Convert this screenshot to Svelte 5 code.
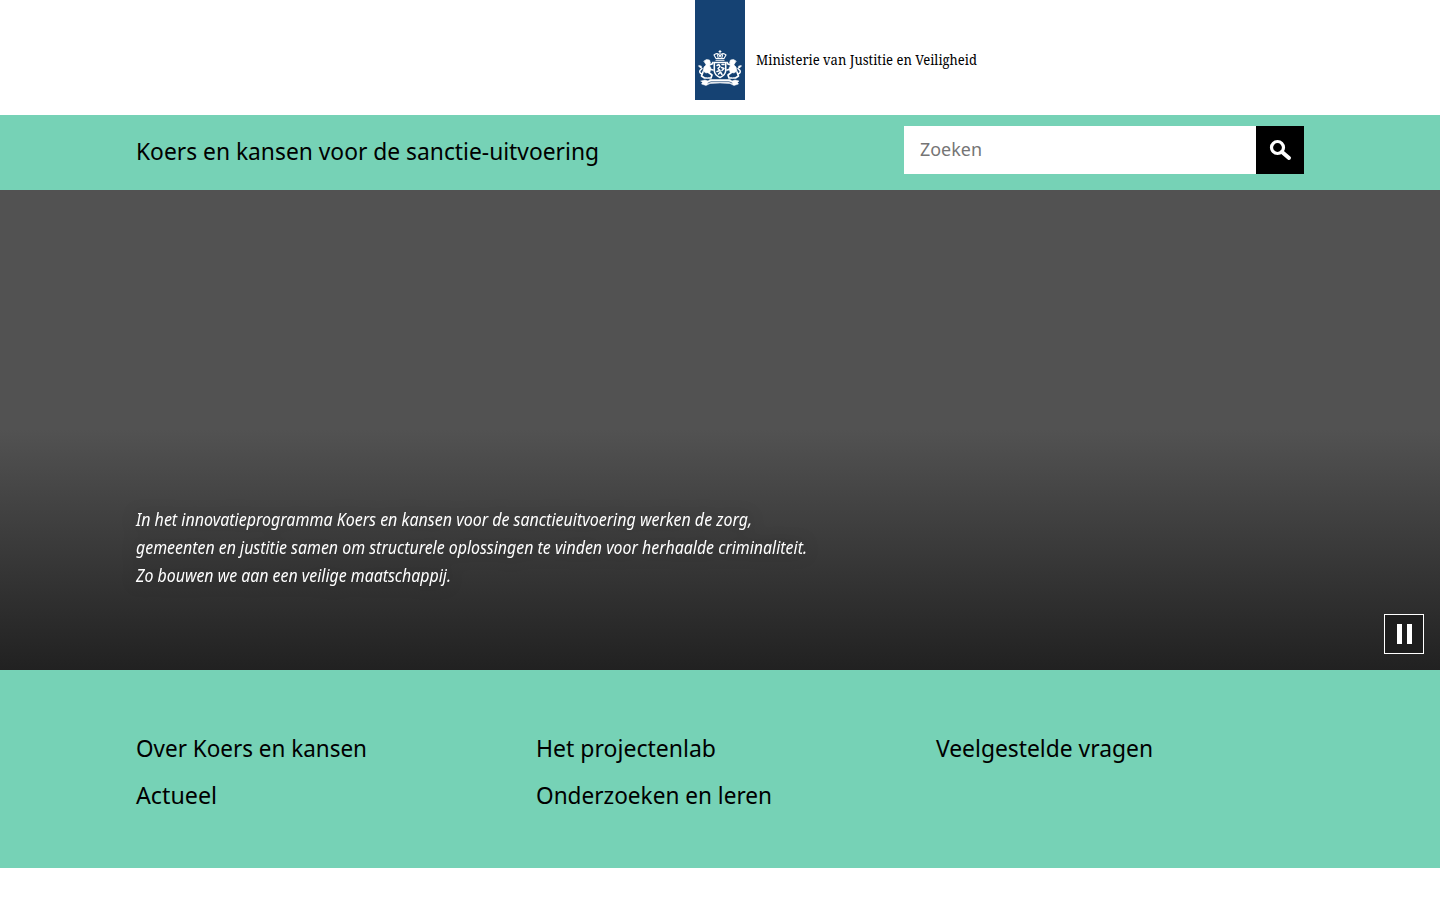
<script>
  const columns = [
    [{ text: 'Over Koers en kansen', width: 231 }, { text: 'Actueel', width: 81 }],
    [{ text: 'Het projectenlab', width: 180 }, { text: 'Onderzoeken en leren', width: 236 }],
    [{ text: 'Veelgestelde vragen', width: 217 }]
  ];
  const intro = [
    { text: 'In het innovatieprogramma Koers en kansen voor de sanctieuitvoering werken de zorg,', width: 616 },
    { text: 'gemeenten en justitie samen om structurele oplossingen te vinden voor herhaalde criminaliteit.', width: 671 },
    { text: 'Zo bouwen we aan een veilige maatschappij.', width: 315 }
  ];
</script>

{#snippet line(text, width, height, baseline)}
  <svg class="line" {width} {height}>
    <text x="0" y={baseline} textLength={width} lengthAdjust="spacingAndGlyphs">{text}</text>
  </svg>
{/snippet}

{#snippet lion()}
  <path d="M9 11l2.500-1.500 3 .5 1 3-1.500 2 2 3-1 4-4 1-3-2 1-4 2-2z" fill="#fff" stroke-width=".6" />
  <path d="M13 15.500l4-1.500 1-1.500M14 19l4 1M8 22l-1.500 4 3 2h2M13 22l4 3-1 3h-3" stroke-width="1.700" />
  <path d="M7 24q-3-1-2-3.500l2-2-2.500-2M4 16l2 .5" stroke-width="1.500" />
{/snippet}

<header>
  <div class="ribbon">
    <svg width="50" height="38" viewBox="0 0 50 38" fill="none" stroke="#fff" stroke-linecap="round" stroke-linejoin="round">
      <path d="M25 .5v3M24 1.500h2M21 8.500l-2-3.500q2.500-2.500 5-.5l1 2.500 1-2.500q2.500-2 5 .5l-2 3.500zM21 10.300h8M22.500 5l.7 3M27.500 5l-.7 3" stroke-width="1.100" />
      <path d="M19.300 12.500h11.400v8.500q-.7 4.500-5.700 6.500-5-2-5.700-6.500z" stroke-width="1.600" />
      <path d="M22 15.500l2-1 1 2-2 2 2 2-3 1M27 14.500h2M26.500 17.500l2.500 1-2 2M23.500 24l2-2 1.500 2.500" stroke-width="1.500" />
      {@render lion()}
      <g transform="matrix(-1 0 0 1 50 0)">{@render lion()}</g>
      <path d="M6 31l4-1 3 1 2-1.500h20l2 1.500 3-1 4 1-1.500 1.500 1 1.500-4.500 1.500-4-2q-10-1-20 0l-4 2-4.500-1.500 1-1.500z" fill="#fff" stroke-width=".5" />
      <path d="M13 33l3-1.300h18l3 1.300" stroke="#154273" stroke-width=".7" />
    </svg>
  </div>
  <div class="ministry">{@render line('Ministerie van Justitie en Veiligheid', 221, 24, 16)}</div>
</header>

<div class="bar">
  <div class="title">{@render line('Koers en kansen voor de sanctie-uitvoering', 463, 36, 27)}</div>
  <form>
    <div class="field">{@render line('Zoeken', 62, 28, 20)}</div>
    <button type="button" aria-label="Zoeken">
      <svg width="48" height="48" fill="none" stroke="#fff">
        <circle cx="21.500" cy="21.500" r="6" stroke-width="3.200" />
        <path d="M26 26l7 6" stroke-width="4" stroke-linecap="round" />
      </svg>
    </button>
  </form>
</div>

<main>
  <div class="intro">
    {#each intro as row}
      {@render line(row.text, row.width, 28, 20)}
    {/each}
  </div>
  <button class="pause" type="button" aria-label="Pauze"><i></i><i></i></button>
</main>

<nav>
  {#each columns as column}
    <div class="column">
      {#each column as link}
        {@render line(link.text, link.width, 47, 34)}
      {/each}
    </div>
  {/each}
</nav>

<style>
  :global(body) { margin: 0; background: #fff; font-family: "Noto Sans", sans-serif; }
  .line { display: block; overflow: visible; }
  header { height: 115px; display: flex; padding-left: 695px; box-sizing: border-box; }
  .ribbon { width: 50px; height: 100px; background: #154273; padding-top: 50px; box-sizing: border-box; }
  .ribbon svg { display: block; }
  .ministry { margin: 49px 0 0 11px; font-family: "Noto Serif", "Liberation Serif", serif; font-size: 13.500px; }
  .bar { height: 75px; background: #76d2b6; padding: 11px 136px 0; box-sizing: border-box; display: flex; justify-content: space-between; }
  .title { padding-top: 7px; font-size: 24px; }
  form { display: flex; height: 48px; margin: 0; }
  .field { width: 352px; background: #fff; padding: 10px 16px; box-sizing: border-box; font-size: 18.500px; fill: #757575; }
  form button { border: 0; background: #000; width: 48px; height: 48px; padding: 0; }
  form button svg { display: block; }
  main { position: relative; height: 480px; box-sizing: border-box; padding: 316px 136px 0; background: linear-gradient(#525252 50%, #212121); }
  .intro { font-size: 17.500px; font-style: italic; fill: #fff; filter: drop-shadow(0 0 8px rgba(0, 0, 0, .3)); }
  .pause { position: absolute; right: 16px; bottom: 16px; width: 40px; height: 40px; box-sizing: border-box; border: 1px solid #fff; background: #1d1d1d; padding: 0; display: flex; justify-content: center; align-items: center; gap: 5px; }
  .pause i { width: 5px; height: 20px; background: #fff; }
  .pause { padding-left: 1px; }
  nav { height: 198px; box-sizing: border-box; background: #76d2b6; padding: 53px 136px 0; display: grid; grid-template-columns: 400px 400px 1fr; font-size: 24px; }
</style>
